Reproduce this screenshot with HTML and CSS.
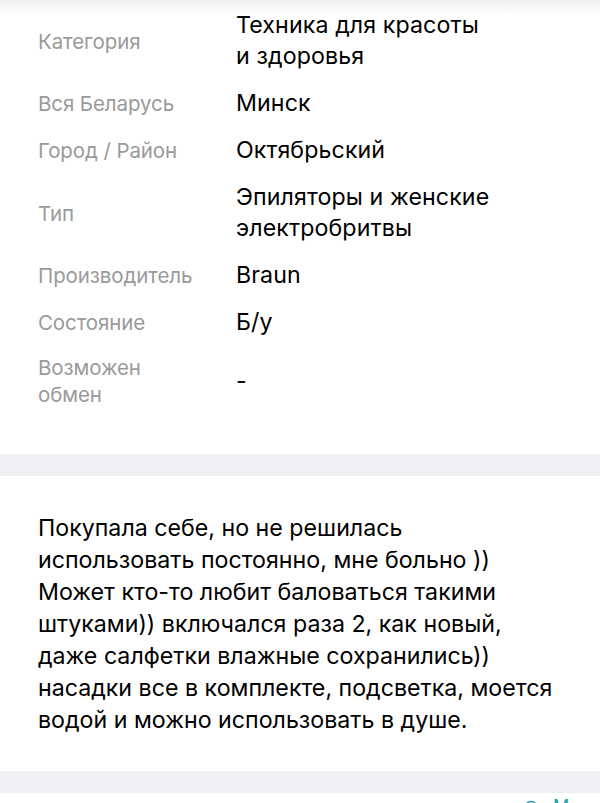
FILE: index.html
```html
<!DOCTYPE html>
<html lang="ru">
<head>
<meta charset="utf-8">
<link rel="stylesheet" href="styles.css">
</head>
<body>
<div class="page">
  <section class="params">
    <div class="row">
      <div class="label">Категория</div>
      <div class="value">Техника для красоты<br>и здоровья</div>
    </div>
    <div class="row">
      <div class="label">Вся Беларусь</div>
      <div class="value">Минск</div>
    </div>
    <div class="row">
      <div class="label">Город / Район</div>
      <div class="value">Октябрьский</div>
    </div>
    <div class="row">
      <div class="label">Тип</div>
      <div class="value">Эпиляторы и женские<br>электробритвы</div>
    </div>
    <div class="row">
      <div class="label">Производитель</div>
      <div class="value">Braun</div>
    </div>
    <div class="row">
      <div class="label">Состояние</div>
      <div class="value">Б/у</div>
    </div>
    <div class="row">
      <div class="label">Возможен<br>обмен</div>
      <div class="value">-</div>
    </div>
  </section>
  <div class="divider"></div>
  <section class="desc">
    <p>Покупала себе, но не решилась<br>использовать постоянно, мне больно ))<br>Может кто-то любит баловаться такими<br>штуками)) включался раза 2, как новый,<br>даже салфетки влажные сохранились))<br>насадки все в комплекте, подсветка, моется<br>водой и можно использовать в душе.</p>
  </section>
  <div class="divider"></div>
  <nav class="actions">
    <span class="act"><svg width="14" height="14" viewBox="0 0 14 14"><rect x="4" y="3" width="6" height="10" rx="2" fill="none" stroke="#c8c8cc" stroke-width="1.4"/></svg></span>
    <span class="act"><svg width="14" height="14" viewBox="0 0 14 14"><path d="M7 3v10M3 7h8" stroke="#c8c8cc" stroke-width="1.4"/></svg></span>
    <span class="act"><svg width="14" height="14" viewBox="0 0 14 14"><circle cx="7" cy="8" r="4" fill="none" stroke="#c8c8cc" stroke-width="1.4"/></svg></span>
    <span class="act teal"><svg class="ico" width="14" height="14" viewBox="0 0 14 14"><circle cx="7" cy="7" r="5.5" fill="none" stroke="#1d9bb3" stroke-width="1.6"/><circle cx="7" cy="7" r="2" fill="#1d9bb3"/></svg><span>М</span></span>
  </nav>
</div>
</body>
</html>
```

FILE: styles.css
```css
html, body {
  margin: 0;
  padding: 0;
  background: #fff;
}
body {
  font-family: Inter, Roboto, "Liberation Sans", sans-serif;
  color: #000;
  overflow: hidden;
}
.page {
  background: linear-gradient(#efefef 0, #fff 14px);
}
.params {
  padding: 10px 38px 46px 38px;
  display: flex;
  flex-direction: column;
  gap: 16px;
}
.row {
  display: grid;
  grid-template-columns: 198px 1fr;
  align-items: center;
}
.label {
  font-size: 20.5px;
  line-height: 27px;
  color: #9a9a9a;
  letter-spacing: -0.1px;
}
.value {
  font-size: 23.2px;
  line-height: 31px;
  color: #000;
  letter-spacing: 0.1px;
}
.divider {
  height: 22px;
  background: #efeff4;
}
.desc {
  padding: 36px 38px 35px 38px;
}
.desc p {
  margin: 0;
  font-size: 23.2px;
  line-height: 32px;
  letter-spacing: 0;
  white-space: nowrap;
}
.actions {
  display: flex;
  height: 40px;
  padding: 7px 0 0 18px;
}
.act {
  width: 186px;
}
.act.teal {
  width: auto;
  margin-left: -52px;
  color: #1d9bb3;
  display: flex;
  align-items: flex-start;
  gap: 15px;
  font-size: 18px;
  line-height: 14px;
}
```
